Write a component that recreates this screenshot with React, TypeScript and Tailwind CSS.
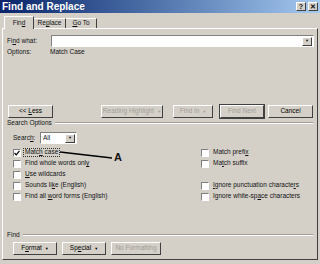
import React from "react";

const raised =
  "border border-t-white border-l-white border-r-[#404040] border-b-[#404040] bg-[#d4d0c8]";
const sunken =
  "border border-t-[#808080] border-l-[#808080] border-r-white border-b-white bg-white";

function Btn({
  label,
  w,
  disabled,
  arrow,
  def,
}: {
  label: React.ReactNode;
  w: string;
  disabled?: boolean;
  arrow?: boolean;
  def?: boolean;
}) {
  return (
    <div
      className={`${w} h-[13px] flex items-center justify-center gap-[3px] whitespace-nowrap ${
        def ? "outline outline-1 outline-[#404040]" : ""
      } ${raised} ${disabled ? "text-[#a19e97]" : "text-black"}`}
    >
      <span className="leading-none">{label}</span>
      {arrow && <span className="text-[4px] leading-none">▼</span>}
    </div>
  );
}

function Check({ label, checked, focus }: { label: React.ReactNode; checked?: boolean; focus?: boolean }) {
  return (
    <div className="h-[11px] flex items-center whitespace-nowrap">
      <div className={`w-[8px] h-[8px] ${sunken} flex items-center justify-center`}>
        {checked && (
          <svg width="6" height="6" viewBox="0 0 6 6">
            <path d="M0.5 3 L2.2 4.8 L5.5 0.8" fill="none" stroke="#000" strokeWidth="1.2" />
          </svg>
        )}
      </div>
      <span
        className={`ml-[2px] px-[1px] leading-none ${
          focus ? "border border-dotted border-[#333]" : "border border-transparent"
        }`}
      >
        {label}
      </span>
    </div>
  );
}

function Group({ label }: { label: string }) {
  return (
    <div className="h-[10px] flex items-center">
      <span className="leading-none">{label}</span>
      <div className="flex-1 ml-[3px] border-t border-t-[#a09d96] border-b border-b-white h-0" />
    </div>
  );
}

export default function App() {
  return (
    <div className="relative w-[320px] h-[264px] bg-[#d4d0c8] overflow-hidden flex flex-col font-['Liberation_Sans',Arial,sans-serif] text-[6.5px] text-[#111]">
      {/* title bar */}
      <div className="h-[13px] flex items-center justify-between pl-[2px] pr-[2px] bg-linear-to-r from-[#0a246a] to-[#a6caf0]">
        <span className="text-white font-bold text-[10px] leading-none">Find and Replace</span>
        <div className="flex gap-[2px]">
          <div className={`w-[10px] h-[9px] ${raised} flex items-center justify-center font-bold text-[7px] leading-none`}>?</div>
          <div className={`w-[10px] h-[9px] ${raised} flex items-center justify-center font-bold text-[7px] leading-none`}>✕</div>
        </div>
      </div>

      {/* tabs */}
      <div className="mt-[3px] h-[12px] flex items-end pl-[4px] relative z-10">
        <div className="w-[30px] h-[13px] mb-[-1px] bg-[#d4d0c8] border-t border-l border-t-white border-l-white border-r border-r-[#404040] flex items-center justify-center">
          <span className="leading-none">
            Fin<u>d</u>
          </span>
        </div>
        <div className="w-[32px] h-[10px] border-t border-t-white border-r border-r-[#404040] flex items-center justify-center">
          <span className="leading-none">
            Re<u>p</u>lace
          </span>
        </div>
        <div className="w-[31px] h-[10px] border-t border-t-white border-r border-r-[#404040] flex items-center justify-center">
          <span className="leading-none">
            <u>G</u>o To
          </span>
        </div>
      </div>

      {/* panel */}
      <div className="mx-[2px] h-[232px] border border-t-white border-l-white border-r-[#404040] border-b-[#404040] px-[4px] flex flex-col">
        <div className="mt-[6px] h-[12px] flex items-center">
          <span className="w-[44px] leading-none">
            Fi<u>n</u>d what:
          </span>
          <div className={`flex-1 h-[12px] ${sunken} flex justify-end items-center pr-[1px] mr-[-1px]`}>
            <div className={`w-[10px] h-[9px] ${raised} flex items-center justify-center text-[4px] leading-none`}>▼</div>
          </div>
        </div>
        <div className="h-[10px] flex items-center">
          <span className="w-[43px] leading-none">Options:</span>
          <span className="leading-none">Match Case</span>
        </div>

        <div className="mt-[48px] flex items-center">
          <div className="ml-[1px]">
            <Btn w="w-[45px]" label={<>&lt;&lt; <u>L</u>ess</>} />
          </div>
          <div className="ml-auto flex">
            <Btn w="w-[62px]" label="Reading Highlight" arrow disabled />
            <div className="ml-[10px]">
              <Btn w="w-[40px]" label="Find in" arrow disabled />
            </div>
            <div className="ml-[7px]">
              <Btn w="w-[44px]" label="Find Next" disabled def />
            </div>
            <div className="ml-[4px]">
              <Btn w="w-[45px]" label="Cancel" />
            </div>
          </div>
        </div>

        <Group label="Search Options" />

        <div className="mt-[4px] h-[12px] flex items-center pl-[6px]">
          <span className="w-[27px] leading-none">
            Searc<u>h</u>:
          </span>
          <div className={`w-[37px] h-[12px] ${sunken} flex items-center justify-between pl-[2px] pr-[1px]`}>
            <span className="leading-none">All</span>
            <div className={`w-[10px] h-[9px] ${raised} flex items-center justify-center text-[4px] leading-none`}>▼</div>
          </div>
        </div>

        <div className="mt-[3px] pl-[6px] grid grid-cols-[188px_1fr]">
          <Check label={<>Matc<u>h</u> case</>} checked focus />
          <Check label={<>Match prefi<u>x</u></>} />
          <Check label={<>Find whole words onl<u>y</u></>} />
          <Check label={<>Ma<u>t</u>ch suffix</>} />
          <Check label={<><u>U</u>se wildcards</>} />
          <div />
          <Check label={<>Sounds li<u>k</u>e (English)</>} />
          <Check label={<><u>I</u>gnore punctuation characte<u>r</u>s</>} />
          <Check label={<>Find all <u>w</u>ord forms (English)</>} />
          <Check label={<>Ignore white-sp<u>a</u>ce characters</>} />
        </div>

        <div className="mt-[28px]">
          <Group label="Find" />
        </div>

        <div className="mt-[2px] flex items-center pl-[6px]">
          <Btn w="w-[44px]" label={<>F<u>o</u>rmat</>} arrow />
          <div className="ml-[5px]">
            <Btn w="w-[44px]" label={<>Sp<u>e</u>cial</>} arrow />
          </div>
          <div className="ml-[5px]">
            <Btn w="w-[50px]" label="No Formatting" disabled />
          </div>
        </div>
      </div>

      {/* annotation */}
      <svg className="absolute left-0 top-0 pointer-events-none" width="320" height="264">
        <line x1="60" y1="152" x2="112" y2="158" stroke="#000" strokeWidth="1.3" />
      </svg>
      <span className="absolute left-[114px] top-[152px] font-bold text-[11px] leading-none">A</span>
    </div>
  );
}
